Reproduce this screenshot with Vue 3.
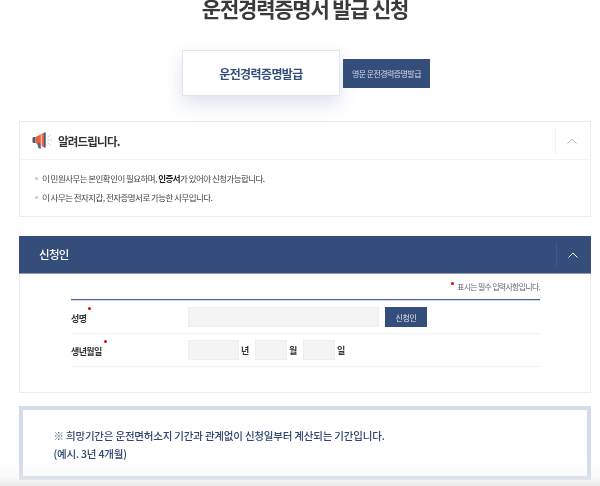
<script setup>
const notices = [
  { id: 1, before: '이 민원사무는 본인확인이 필요하며, ', strong: '인증서', after: '가 있어야 신청가능합니다.' },
  { id: 2, before: '이 사무는 전자지갑, 전자증명서로 가능한 사무입니다.', strong: '', after: '' }
]
const dateParts = [
  { unit: '년', cls: 'year' },
  { unit: '월', cls: 'small' },
  { unit: '일', cls: 'small' }
]
</script>

<template>
  <div class="page">
    <h1 class="title">운전경력증명서 발급 신청</h1>

    <div class="tabs">
      <div class="tab-active">운전경력증명발급</div>
      <div class="tab-other">영문 운전경력증명발급</div>
    </div>

    <section class="notice">
      <header class="notice-head">
        <svg class="megaphone" viewBox="0 0 21 17" width="21" height="17" aria-hidden="true">
          <path d="M.5 6.500c0-1 .6-1.500 1.400-1.500H3.500v6H1.900C1.100 11 .5 10.500 .5 9.500z" fill="#4a5b78" />
          <path d="M3.500 5 12 .8v14.400L3.500 11z" fill="#e8603c" />
          <path d="M8.800 2.300h1.300v11.400H8.800z" fill="#f6c4b2" />
          <path d="M12 .4h1.700v15.200H12z" fill="#4a5b78" />
          <path d="M5 11.300h3l1.200 5.200H6.700z" fill="#55677f" />
          <path d="M15.500 8h4.500M15.500 5.200l3-2.200M15.500 10.800l3 2.200" stroke="#b9c1cc" stroke-width="1" stroke-dasharray="1.500 1" fill="none" />
        </svg>
        <span class="notice-title">알려드립니다.</span>
        <div class="toggle">
          <svg viewBox="0 0 10 6" width="10" height="6" aria-hidden="true"><path d="M.5 5.500 5 1l4.500 4.500" fill="none" stroke="#b5b5b5" stroke-width="1" /></svg>
        </div>
      </header>
      <ul class="notice-list">
        <li v-for="n in notices" :key="n.id">
          {{ n.before }}<b v-if="n.strong">{{ n.strong }}</b>{{ n.after }}
        </li>
      </ul>
    </section>

    <section class="applicant">
      <header class="applicant-head">
        <span class="applicant-title">신청인</span>
        <div class="toggle toggle-dark">
          <svg viewBox="0 0 10 6" width="10" height="6" aria-hidden="true"><path d="M.5 5.500 5 1l4.500 4.500" fill="none" stroke="#ffffff" stroke-width="1" /></svg>
        </div>
      </header>
      <div class="form-body">
        <p class="req-note"><i class="dot"></i>표시는 필수 입력사항입니다.</p>
        <div class="form">
          <div class="row">
            <label class="label">성명<i class="dot"></i></label>
            <div class="field name-input"></div>
            <button class="lookup" type="button">신청인</button>
          </div>
          <div class="row">
            <label class="label">생년월일<i class="dot"></i></label>
            <template v-for="p in dateParts" :key="p.unit">
              <div class="field" :class="p.cls"></div>
              <span class="unit">{{ p.unit }}</span>
            </template>
          </div>
        </div>
      </div>
    </section>

    <section class="callout">
      <p>※ 희망기간은 운전면허소지 기간과 관계없이 신청일부터 계산되는 기간입니다.</p>
      <p>(예시. 3년 4개월)</p>
    </section>

    <div class="bottom-fade"></div>
  </div>
</template>

<style>
html, body { margin: 0; background: #fff; }
</style>

<style scoped>
.page {
  position: relative;
  width: 600px;
  height: 486px;
  overflow: hidden;
  box-sizing: border-box;
  padding: 0 9px 0 19px;
  font-family: "Noto Sans CJK KR", "Noto Sans", sans-serif;
  color: #333;
  background: #fff;
  filter: blur(0.35px);
}
.title {
  margin: -10px 0 0;
  height: 36px;
  line-height: 36px;
  text-align: center;
  font-size: 21px;
  font-weight: 700;
  letter-spacing: -1.2px;
  color: #3a3a3a;
}
.tabs {
  display: flex;
  align-items: center;
  margin: 24px 0 0 163px;
  height: 46px;
}
.tab-active {
  width: 158px;
  height: 46px;
  box-sizing: border-box;
  border: 1px solid #e0e5ef;
  background: #fff;
  box-shadow: 0 8px 18px rgba(52, 77, 122, 0.16);
  display: flex;
  align-items: center;
  justify-content: center;
  font-size: 12px;
  font-weight: 700;
  letter-spacing: -0.6px;
  color: #344d7a;
}
.tab-other {
  margin-left: 3px;
  width: 87px;
  height: 29px;
  background: #344d7a;
  color: #d6dce6;
  display: flex;
  align-items: center;
  justify-content: center;
  font-size: 8px;
  letter-spacing: -0.6px;
}
.notice {
  margin-top: 25px;
  height: 96px;
  box-sizing: border-box;
  border: 1px solid #ececec;
}
.notice-head {
  position: relative;
  height: 38px;
  box-sizing: border-box;
  border-bottom: 1px solid #f4f4f4;
  display: flex;
  align-items: center;
  padding-left: 12px;
}
.megaphone { margin-right: 5px; }
.notice-title {
  font-size: 11.500px;
  font-weight: 700;
  letter-spacing: -0.8px;
  color: #333;
}
.toggle {
  position: absolute;
  right: 0;
  top: 6px;
  width: 35px;
  height: 26px;
  box-sizing: border-box;
  padding-right: 2px;
  border-left: 1px solid #f2f2f2;
  display: flex;
  align-items: center;
  justify-content: center;
}
.notice-list {
  list-style: none;
  margin: 0;
  padding: 9px 0 0 15px;
  font-size: 8.500px;
  letter-spacing: -0.55px;
  color: #444;
}
.notice-list li {
  position: relative;
  height: 19px;
  line-height: 19px;
  padding-left: 7px;
}
.notice-list li::before {
  content: "";
  position: absolute;
  left: 0;
  top: 8px;
  width: 3px;
  height: 3px;
  border-radius: 50%;
  background: #c9c9c9;
}
.notice-list b { font-weight: 700; color: #222; }
.applicant {
  margin-top: 19px;
  height: 157px;
  box-sizing: border-box;
  border: 1px solid #ececec;
  border-top: 0;
}
.applicant-head {
  position: relative;
  height: 38px;
  margin: 0 -1px;
  background: #344d7a;
  border-bottom: 1px solid #8d9ab3;
  box-sizing: border-box;
  display: flex;
  align-items: center;
  padding-left: 20px;
  color: #fff;
  font-size: 11.500px;
  font-weight: 500;
  letter-spacing: -0.7px;
}
.applicant-title { margin-top: -2px; }
.toggle-dark {
  top: 6px;
  border-left-color: #415a86;
}
.form-body { padding: 5px 50px 0 51px; }
.req-note {
  margin: 0;
  height: 20px;
  line-height: 16px;
  text-align: right;
  font-size: 8px;
  letter-spacing: -0.75px;
  color: #666;
}
.req-note .dot { position: relative; top: -5px; margin-right: 3px; }
.dot {
  display: inline-block;
  width: 3px;
  height: 3px;
  border-radius: 50%;
  background: #f00000;
}
.form {
  border-top: 1px solid #4e6490;
  padding-top: 1px;
  box-shadow: inset 0 1px #cfd6e4;
}
.row {
  display: flex;
  align-items: center;
  height: 33px;
  box-sizing: border-box;
  border-bottom: 1px solid #f3f3f3;
}
.label {
  position: relative;
  width: 117px;
  flex: none;
  font-size: 9px;
  font-weight: 700;
  letter-spacing: -0.6px;
  color: #333;
  top: 1px;
}
.label .dot {
  position: absolute;
  top: -5px;
  margin-left: 2px;
}
.field {
  height: 20px;
  box-sizing: border-box;
  background: #f4f4f4;
  border: 1px solid #eeeeee;
}
.name-input { width: 191px; }
.year { width: 51px; }
.small { width: 32px; }
.unit {
  width: 16px;
  padding-left: 2px;
  box-sizing: border-box;
  font-size: 9px;
  font-weight: 700;
  color: #333;
}
.lookup {
  margin-left: 6px;
  width: 42px;
  height: 20px;
  border: 0;
  padding: 0;
  background: #344d7a;
  color: #dfe4ec;
  font-family: inherit;
  font-size: 8px;
  letter-spacing: -0.4px;
}
.callout {
  margin-top: 13px;
  height: 74px;
  box-sizing: border-box;
  border: 4.500px solid #d3dcea;
  padding: 17px 0 0 30.500px;
  font-size: 10.500px;
  font-weight: 500;
  letter-spacing: -0.2px;
  color: #2f4570;
}
.callout p { margin: 0; height: 17.500px; line-height: 17.500px; }
.bottom-fade {
  position: absolute;
  left: 0;
  right: 0;
  bottom: 0;
  height: 26px;
  background: linear-gradient(to bottom, rgba(235,235,235,0), rgba(235,235,235,0.25) 60%, #ebebeb);
  pointer-events: none;
}
</style>
